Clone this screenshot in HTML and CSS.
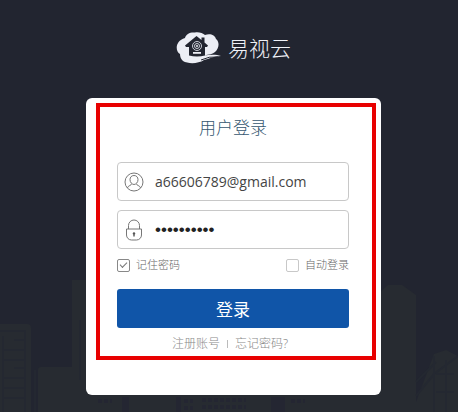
FILE: index.html
```html
<!DOCTYPE html>
<html lang="zh-CN">
<head>
<meta charset="utf-8">
<meta name="viewport" content="width=device-width, initial-scale=1">
<title>易视云</title>
<link rel="stylesheet" href="styles.css">
</head>
<body>
<svg class="skyline" viewBox="0 0 458 142" preserveAspectRatio="xMidYMax slice" aria-hidden="true">
  <path class="tower" d="M0 54h27q4 0 4 4v84H0zM38 100q0-3 3-3h31V10h48v132H38zM380 22l8-7h14l14 10v117h-36zM416 132l18-48 12-4 12 6v56h-42zM80 122h300v20H80z"/>
  <path class="lines" d="M0 61h24M3 66v76M14 70h10M4 80h20M4 90h20M14 98h10M4 108h20M4 118h20M4 128h20M25 60v82M80 50v60M35 100v42M416 126l18-22 24-18M434 86v56M446 90v52M436 104h18M436 122h18M416 112l20-20"/>
  <path class="shade" d="M122 127h7v15h-7zM176 127h5v15h-5zM271 127h14v15h-14z"/>
  <path class="windows" d="M202 130h44M202 137h44M98 131h14M184 131h9M291 131h14M184 138h9"/>
</svg>
<main class="page">
  <header class="brand">
    <svg class="brand-mark" viewBox="0 0 45 32" aria-hidden="true">
      <path class="cloud" d="M9 6C10 2 14 0 19 0.500C22-0.500 27 1 29 3C34 1 39 3 40 7C44 10 43 17 39 20C37 22 33 22.500 28 23.500C34 22.500 40 22 45 24C38 24 33 27 28 28C22 32 12 32 7 29C5 27 4 25 4 22C-1 19-1 9 9 6z"/>
      <path class="house" d="M9 13.500L20.500 4l5 4V5.500h3v5l3.500 3-1 1.500h-2v8.500q-8 2-16 0V15h-3z"/>
      <circle class="ring" cx="21" cy="14" r="4.500"/>
      <circle class="ring" cx="21" cy="14" r="2.500"/>
      <circle class="cloud" cx="21" cy="14" r="1"/>
      <path class="cloud" d="M17 20h8v1.800h-8z"/>
      <path class="swoosh" d="M25 28q8-4 17-3"/>
    </svg>
    <span class="brand-name">易视云</span>
  </header>
  <section class="card">
    <form class="frame">
      <h1 class="title">用户登录</h1>
      <div class="field">
        <svg class="field-icon" viewBox="0 0 20 22" aria-hidden="true">
          <circle cx="10" cy="11" r="9"/>
          <path d="M10 4.500c2.500 0 4 1.700 4 4.200S12 13.500 10 13.500 6 11.200 6 8.700s1.500-4.200 4-4.200zM7.700 12.700c0 1.700-3.500 1.600-4.400 4.300M12.300 12.700c0 1.700 3.500 1.600 4.400 4.300"/>
        </svg>
        <input class="field-input" type="text" aria-label="账号" value="a66606789@gmail.com">
      </div>
      <div class="field">
        <svg class="field-icon" viewBox="0 0 20 22" aria-hidden="true">
          <path d="M4.500 10V6.500a5.500 5.500 0 0 1 11 0V10M2.500 10h15v6a5 5 0 0 1-5 5h-5a5 5 0 0 1-5-5z"/>
          <path class="keyhole" d="M10 13.200a1.300 1.300 0 0 1 .7 2.400v1.900H9.300v-1.900a1.300 1.300 0 0 1 .7-2.400z"/>
        </svg>
        <input class="field-input" type="password" aria-label="密码" value="0123456789">
      </div>
      <div class="options">
        <label class="option"><input class="check" type="checkbox" checked>记住密码</label>
        <label class="option"><input class="check" type="checkbox">自动登录</label>
      </div>
      <button class="submit" type="submit">登录</button>
      <nav class="links">
        <a href="#register">注册账号</a>
        <span class="divider"></span>
        <a href="#forgot">忘记密码?</a>
      </nav>
    </form>
  </section>
</main>
</body>
</html>
```
FILE: styles.css
```css
* {
  box-sizing: border-box;
}

body {
  margin: 0;
  min-height: 100vh;
  background: #222530;
  font-family: "Noto Sans", "Noto Sans CJK SC", sans-serif;
}

.skyline {
  position: absolute;
  left: 0;
  bottom: 0;
  width: 100%;
  height: 142px;
}

.tower { fill: #272b31; }
.lines { fill: none; stroke: #242831; stroke-width: 2; }
.shade { fill: #242632; }
.windows { fill: none; stroke: #242632; stroke-width: 4; stroke-dasharray: 4 2; }

.page {
  position: relative;
  display: flex;
  flex-direction: column;
  align-items: center;
  padding: 32px 0 16px 9px;
}

.brand {
  display: flex;
  align-items: center;
  gap: 7px;
  height: 32px;
  margin-bottom: 34px;
}

.brand-mark {
  width: 45px;
  height: 32px;
}

.cloud { fill: #eceef5; }
.house { fill: #222530; }
.ring { fill: none; stroke: #c9ccd6; stroke-width: 1; }
.swoosh { fill: none; stroke: #222530; stroke-width: 1; }

.brand-name {
  color: #f0f2f8;
  font-size: 21px;
  font-weight: 300;
  line-height: 32px;
}

.card {
  width: 100%;
  max-width: 295px;
  padding: 5px 5px 35px 10px;
  background: #fff;
  border-radius: 6px;
}

.frame {
  display: flex;
  flex-direction: column;
  padding: 9px 23px 4px 17px;
  border: 4px solid #e80000;
}

.title {
  margin: 0 0 22px;
  color: #34566f;
  font-size: 17px;
  font-weight: 300;
  line-height: 24px;
  text-align: center;
}

.field {
  display: flex;
  align-items: center;
  gap: 11px;
  height: 39px;
  padding: 0 6px;
  border: 1px solid #c8c8c8;
  border-radius: 4px;
}

.field + .field {
  margin-top: 9px;
}

.field-icon {
  flex: none;
  width: 20px;
  height: 22px;
  fill: none;
  stroke: #777;
  stroke-width: 1;
}

.field-icon .keyhole {
  fill: #555;
  stroke: none;
}

.field-input {
  flex: 1;
  min-width: 0;
  padding: 0;
  border: 0;
  outline: 0;
  background: transparent;
  color: #444;
  font-family: "Open Sans", "Noto Sans CJK SC", sans-serif;
  font-size: 14px;
}

.field-input[type="password"] {
  color: #222;
  font-family: "Liberation Sans", sans-serif;
  font-size: 17px;
}

.options {
  display: flex;
  justify-content: space-between;
  margin: 8px 0 16px;
}

.option {
  display: flex;
  align-items: center;
  gap: 6px;
  color: #666;
  font-size: 11px;
  font-weight: 300;
  line-height: 16px;
}

.check {
  appearance: none;
  display: grid;
  place-items: center;
  width: 13px;
  height: 13px;
  margin: 0;
  border: 1px solid #c8c8c8;
  border-radius: 2px;
}

.check:checked {
  border-color: #888;
}

.check:checked::before {
  content: "";
  width: 6px;
  height: 3px;
  border: solid #777;
  border-width: 0 0 1px 1px;
  transform: translateY(-1px) rotate(-45deg);
}

.submit {
  height: 39px;
  padding: 0;
  border: 0;
  border-radius: 3px;
  background: #1055a8;
  color: #fff;
  font-family: inherit;
  font-size: 17px;
}

.links {
  display: flex;
  align-items: center;
  justify-content: center;
  gap: 7px;
  margin: 8px 6px 0 0;
  font-size: 12px;
  font-weight: 300;
  line-height: 16px;
}

.links a {
  color: #888;
  text-decoration: none;
}

.divider {
  width: 1px;
  height: 8px;
  background: #bbb;
}
```
